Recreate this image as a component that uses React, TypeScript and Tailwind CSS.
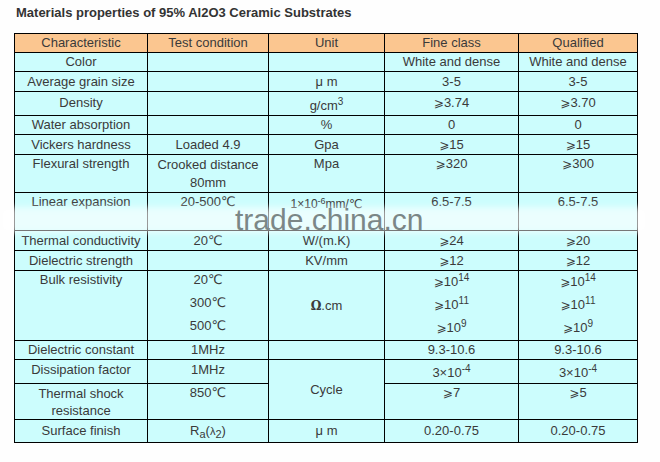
const font = "font-['Liberation_Sans',Arial,'DejaVu_Sans',sans-serif]";

const Ge = () => <span className="font-['DejaVu_Sans',sans-serif] text-[12px]">⩾</span>;

const Pow = ({ base, exp }: { base: string; exp: string }) => (
    <span>
        <Ge />
        {base}
        <sup className="text-[10px]">{exp}</sup>
    </span>
);

const App = () => {
    const head = "border border-black bg-[#fbc690] p-0 text-center font-normal";
    const td = "border border-black p-0 text-center";
    const top = "border border-black p-0 text-center align-top";

    return (
        <div className={`relative h-[462px] w-[660px] bg-[#fefefe] px-[14px] pt-[5px] text-[#3a3a3a] ${font}`}>
            <h1 className="pl-[2px] text-[13px] font-bold leading-[16px] text-[#333]">
                Materials properties of 95% Al2O3 Ceramic Substrates
            </h1>

            <table className="mt-[12px] w-[623px] table-fixed border-collapse bg-[#ccfdfd] text-[13px] leading-[18px]">
                <colgroup>
                    <col className="w-[133px]" />
                    <col className="w-[121px]" />
                    <col className="w-[116px]" />
                    <col className="w-[134px]" />
                    <col className="w-[119px]" />
                </colgroup>
                <tbody>
                    <tr className="h-[19px]">
                        <th className={head}>Characteristic</th>
                        <th className={head}>Test condition</th>
                        <th className={head}>Unit</th>
                        <th className={head}>Fine class</th>
                        <th className={head}>Qualified</th>
                    </tr>
                    <tr className="h-[19px]">
                        <td className={td}>Color</td>
                        <td className={td}></td>
                        <td className={td}></td>
                        <td className={td}>White and dense</td>
                        <td className={td}>White and dense</td>
                    </tr>
                    <tr className="h-[20px]">
                        <td className={td}>Average grain size</td>
                        <td className={td}></td>
                        <td className={td}>μ m</td>
                        <td className={td}>3-5</td>
                        <td className={td}>3-5</td>
                    </tr>
                    <tr className="h-[23px]">
                        <td className={`${td} pb-[2px]`}>Density</td>
                        <td className={td}></td>
                        <td className={`${td} pt-[5px]`}>
                            g/cm<sup className="text-[10px]">3</sup>
                        </td>
                        <td className={`${td} pb-[2px]`}><Ge />3.74</td>
                        <td className={`${td} pb-[2px]`}><Ge />3.70</td>
                    </tr>
                    <tr className="h-[19px]">
                        <td className={td}>Water absorption</td>
                        <td className={td}></td>
                        <td className={td}>%</td>
                        <td className={td}>0</td>
                        <td className={td}>0</td>
                    </tr>
                    <tr className="h-[20px]">
                        <td className={td}>Vickers hardness</td>
                        <td className={td}>Loaded 4.9</td>
                        <td className={td}>Gpa</td>
                        <td className={td}><Ge />15</td>
                        <td className={td}><Ge />15</td>
                    </tr>
                    <tr className="h-[38px]">
                        <td className={top}>Flexural strength</td>
                        <td className={td}>Crooked distance<br />80mm</td>
                        <td className={top}>Mpa</td>
                        <td className={top}><Ge />320</td>
                        <td className={top}><Ge />300</td>
                    </tr>
                    <tr className="h-[38px]">
                        <td className={top}>Linear expansion</td>
                        <td className={top}>20-500℃</td>
                        <td className={`${top} pt-[2px] text-[12px]`}>
                            1×10<sup className="text-[9px]">-6</sup>mm/℃
                        </td>
                        <td className={top}>6.5-7.5</td>
                        <td className={top}>6.5-7.5</td>
                    </tr>
                    <tr className="h-[20px]">
                        <td className={td}>Thermal conductivity</td>
                        <td className={td}>20℃</td>
                        <td className={td}>W/(m.K)</td>
                        <td className={td}><Ge />24</td>
                        <td className={td}><Ge />20</td>
                    </tr>
                    <tr className="h-[20px]">
                        <td className={td}>Dielectric strength</td>
                        <td className={td}></td>
                        <td className={td}>KV/mm</td>
                        <td className={td}><Ge />12</td>
                        <td className={td}><Ge />12</td>
                    </tr>
                    <tr className="h-[70px]">
                        <td className={top}>Bulk resistivity</td>
                        <td className={top}>
                            <div className="flex flex-col gap-[5px]">
                                <span>20℃</span>
                                <span>300℃</span>
                                <span>500℃</span>
                            </div>
                        </td>
                        <td className={td}>
                            <span className="font-['DejaVu_Serif',serif] text-[12px] font-bold">Ω</span>.cm
                        </td>
                        <td className={`${top} pt-[2px]`}>
                            <div className="flex flex-col gap-[5px]">
                                <Pow base="10" exp="14" />
                                <Pow base="10" exp="11" />
                                <Pow base="10" exp="9" />
                            </div>
                        </td>
                        <td className={`${top} pt-[2px]`}>
                            <div className="flex flex-col gap-[5px]">
                                <Pow base="10" exp="14" />
                                <Pow base="10" exp="11" />
                                <Pow base="10" exp="9" />
                            </div>
                        </td>
                    </tr>
                    <tr className="h-[19px]">
                        <td className={td}>Dielectric constant</td>
                        <td className={td}>1MHz</td>
                        <td className={td}></td>
                        <td className={td}>9.3-10.6</td>
                        <td className={td}>9.3-10.6</td>
                    </tr>
                    <tr className="h-[24px]">
                        <td className={`${td} pb-[3px]`}>Dissipation factor</td>
                        <td className={`${td} pb-[3px]`}>1MHz</td>
                        <td className={td} rowSpan={2}>Cycle</td>
                        <td className={`${td} pt-[3px]`}>3×10<sup className="text-[10px]">-4</sup></td>
                        <td className={`${td} pt-[3px]`}>3×10<sup className="text-[10px]">-4</sup></td>
                    </tr>
                    <tr className="h-[36px]">
                        <td className={`${td} leading-[17px]`}>Thermal shock<br />resistance</td>
                        <td className={`${top} leading-[17px]`}>850℃</td>
                        <td className={`${top} leading-[17px]`}><Ge />7</td>
                        <td className={`${top} leading-[17px]`}><Ge />5</td>
                    </tr>
                    <tr className="h-[23px]">
                        <td className={td}>Surface finish</td>
                        <td className={td}>
                            R<sub className="text-[11px]">a</sub>(<span className="text-[11px]">λ</span><sub className="text-[11px]">2</sub>)
                        </td>
                        <td className={td}>μ m</td>
                        <td className={td}>0.20-0.75</td>
                        <td className={td}>0.20-0.75</td>
                    </tr>
                </tbody>
            </table>

            {/* trade.china.cn watermark laid over the table */}
            <div className="absolute left-0 top-[207px] h-[26px] w-[648px] bg-white/60 blur-[3px]" />
            <div className="absolute left-[235px] top-[205px] text-[30px] leading-none text-[#7b8787]">
                trade.china.cn
            </div>
        </div>
    );
};

export default App;
